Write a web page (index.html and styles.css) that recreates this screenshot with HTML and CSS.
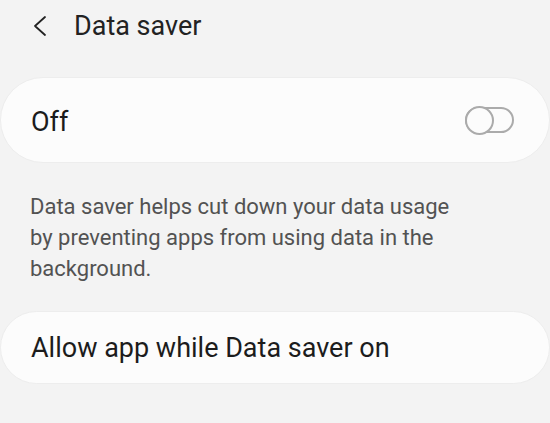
FILE: index.html
```html
<!DOCTYPE html>
<html>
<head>
<meta charset="utf-8">
<link rel="stylesheet" href="styles.css">
</head>
<body>
<div class="header">
  <svg class="back" width="18" height="22" viewBox="0 0 18 22"><polyline points="15,2 5,11 15,20" fill="none" stroke="#222" stroke-width="1.8" stroke-linecap="round" stroke-linejoin="round"/></svg>
  <span class="title">Data saver</span>
</div>
<div class="card card-main">
  <span class="label">Off</span>
  <span class="toggle"><span class="knob"></span></span>
</div>
<p class="desc">Data saver helps cut down your data usage<br>by preventing apps from using data in the<br>background.</p>
<div class="card card-allow">
  <span class="label">Allow app while Data saver on</span>
</div>
</body>
</html>
```
FILE: styles.css
```css
html, body {
  margin: 0;
  padding: 0;
  background: #f3f3f3;
  font-family: Roboto, "Liberation Sans", sans-serif;
}
.header {
  display: flex;
  align-items: center;
  height: 51px;
  padding-left: 30px;
}
.back {
  margin-right: 26px;
}
.title {
  font-size: 27px;
  color: #222;
}
.card {
  background: #fcfcfc;
  border: 1px solid #ededed;
  border-radius: 44px;
  display: flex;
  align-items: center;
  justify-content: space-between;
  padding: 0 35px 0 30px;
  box-sizing: border-box;
  width: 550px;
}
.card-main {
  margin-top: 26px;
  height: 86px;
}
.card-allow {
  height: 73px;
  border-radius: 37px;
}
.label {
  font-size: 27px;
  color: #1c1c1c;
  padding-top: 3px;
}
.card-allow .label {
  padding-top: 1px;
}
.toggle {
  position: relative;
  width: 49px;
  height: 26px;
  border: 2px solid #ababab;
  border-radius: 15px;
  box-sizing: border-box;
}
.knob {
  position: absolute;
  left: -2px;
  top: -3.5px;
  width: 29px;
  height: 29px;
  border: 2px solid #ababab;
  border-radius: 50%;
  box-sizing: border-box;
  background: #fcfcfc;
}
.desc {
  margin: 28px 0 27px 0;
  padding: 0 30px;
  font-size: 22px;
  line-height: 31px;
  color: #525252;
}
```
